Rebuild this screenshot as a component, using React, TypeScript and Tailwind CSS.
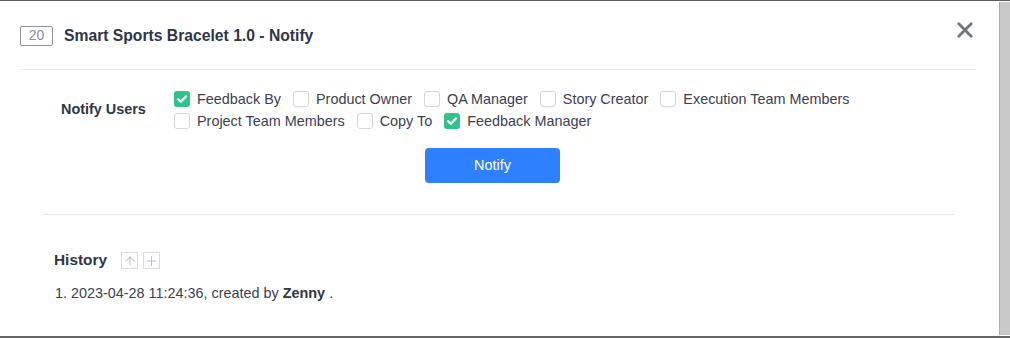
import React from 'react';
import { ArrowUp, Plus } from 'lucide-react';

interface NotifyOption {
  label: string;
  checked: boolean;
}

const initialOptions: NotifyOption[] = [
  { label: 'Feedback By', checked: true },
  { label: 'Product Owner', checked: false },
  { label: 'QA Manager', checked: false },
  { label: 'Story Creator', checked: false },
  { label: 'Execution Team Members', checked: false },
  { label: 'Project Team Members', checked: false },
  { label: 'Copy To', checked: false },
  { label: 'Feedback Manager', checked: true }
];

const CheckBox: React.FC<{ checked: boolean; label: string; onToggle: () => void }> = ({ checked, label, onToggle }) => (
  <label className="mr-3 flex cursor-pointer items-center" onClick={onToggle}>
    {checked ? (
      <span className="flex h-4 w-4 items-center justify-center rounded-[3px] bg-[#2cc48a]">
        <svg width="12" height="12" viewBox="0 0 12 12" fill="none">
          <path d="M2.2 6.2 L4.9 8.8 L9.9 3.4" stroke="#fff" strokeWidth="2.2" strokeLinecap="round" strokeLinejoin="round" />
        </svg>
      </span>
    ) : (
      <span className="h-4 w-4 rounded-[3px] border border-[#d3d6dc] bg-white" />
    )}
    <span className="ml-[7px] text-[#3a4051]">{label}</span>
  </label>
);

export default function App() {
  const [options, setOptions] = React.useState(initialOptions);

  const toggle = (index: number) => {
    setOptions((prev) => prev.map((o, i) => (i === index ? { ...o, checked: !o.checked } : o)));
  };

  return (
    <div className="flex h-[338px] w-[1010px] overflow-hidden border-t border-b-2 border-t-[#5c5c5c] border-b-[#666] bg-white font-['Liberation_Sans',Arial,sans-serif] text-[14.4px]">
      <div className="flex-1 pl-5 pr-[23px]">
        {/* header */}
        <div className="flex h-[69px] items-start justify-between border-b border-[#e8e8e8]">
          <div className="mt-[23px] flex items-center gap-[11px]">
            <span className="flex h-5 w-[33px] items-center justify-center rounded-[2px] border border-[#8c919c] text-[14px] text-[#8a8f99]">
              20
            </span>
            <span className="text-[15.7px] font-bold text-[#2e3547]">Smart Sports Bracelet 1.0 - Notify</span>
          </div>
          <button type="button" className="mr-[3px] mt-[21px] text-[#6e7587]">
            <svg width="16" height="16" viewBox="0 0 16 16" fill="none">
              <path d="M1.8 1.8 L14.2 14.2 M14.2 1.8 L1.8 14.2" stroke="currentColor" strokeWidth="2.8" strokeLinecap="round" />
            </svg>
          </button>
        </div>

        <div className="px-[22px]">
          {/* notify users */}
          <div className="mt-[18px] flex items-center">
            <div className="w-[132px] pl-[19px] font-bold text-[#2e3547]">Notify Users</div>
            <div className="flex flex-1 flex-wrap leading-[22px]">
              {options.map((o, i) => (
                <CheckBox key={o.label} label={o.label} checked={o.checked} onToggle={() => toggle(i)} />
              ))}
            </div>
          </div>

          <button
            type="button"
            className="ml-[383px] mt-4 flex h-[35px] w-[135px] items-center justify-center rounded-[4px] bg-[#2f80ff] text-white"
          >
            Notify
          </button>

          <div className="mt-[31px] border-t border-[#ebebeb]" />

          {/* history */}
          <div className="mt-[37px] flex h-[17px] items-center pl-3">
            <span className="-mt-[1px] text-[15.4px] font-bold text-[#2e3547]">History</span>
            <span className="ml-[14px] flex h-[17px] w-[17px] items-center justify-center border border-[#d8dbe2] text-[#bcc2cc]">
              <ArrowUp size={14} strokeWidth={1.8} />
            </span>
            <span className="ml-[5px] flex h-[17px] w-[17px] items-center justify-center border border-[#d8dbe2] text-[#bcc2cc]">
              <Plus size={16} strokeWidth={1.8} />
            </span>
          </div>

          <div className="mt-[13px] pl-[13px] leading-[22px] text-[#3a4051]">
            1. 2023-04-28 11:24:36, created by <span className="font-bold text-[#2e3547]">Zenny</span> .
          </div>
        </div>
      </div>

      {/* scrollbar */}
      <div className="my-[1px] w-[11px] border-l border-[#ababab] bg-[#c9c9c9]" />
    </div>
  );
}
